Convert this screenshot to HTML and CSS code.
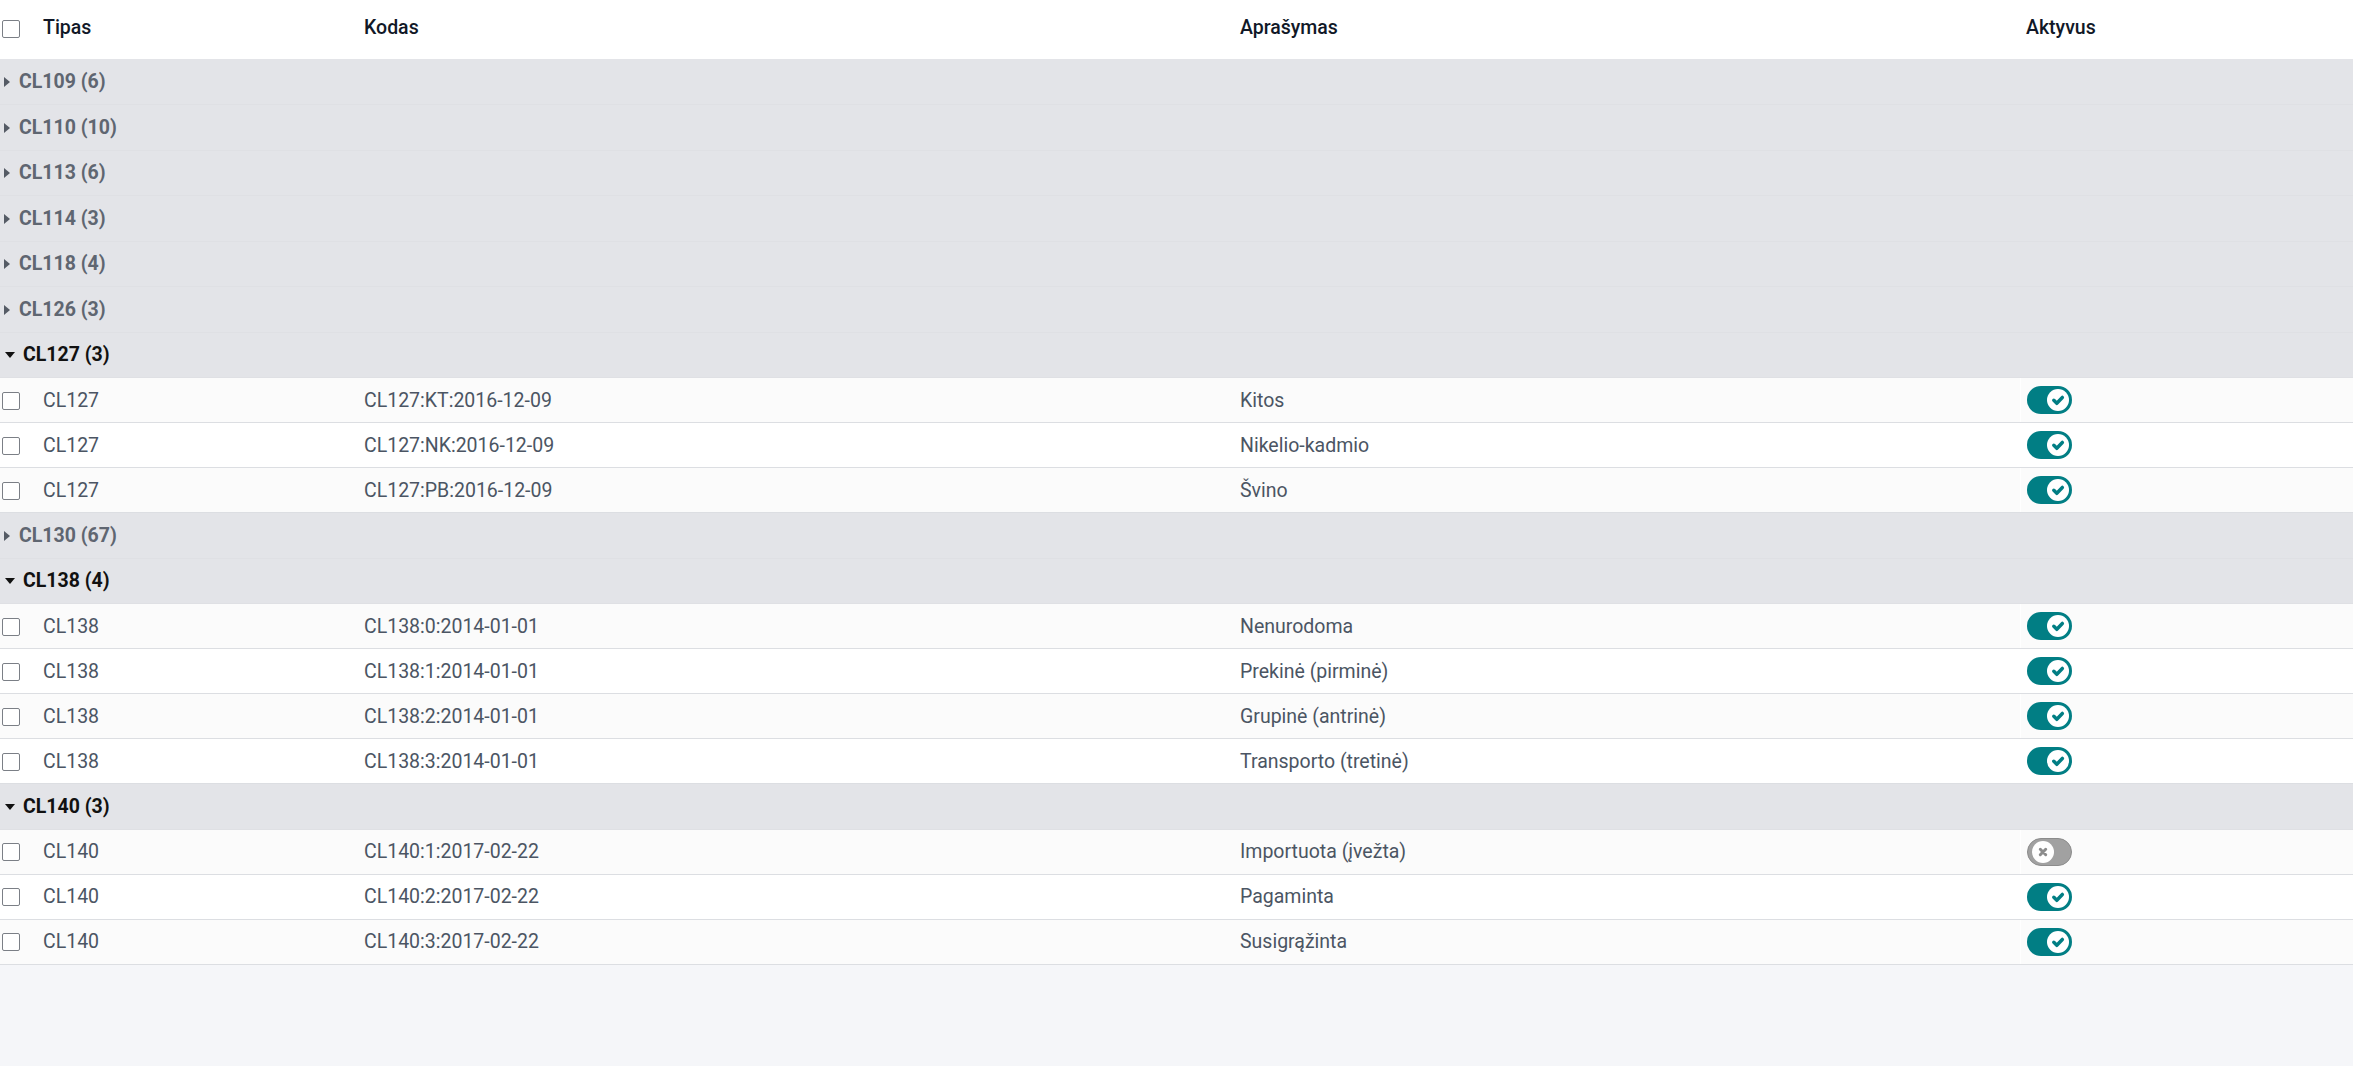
FILE: index.html
```html
<!DOCTYPE html>
<html lang="lt">
<head>
    <meta charset="UTF-8">
    <title>Klasifikatoriai</title>
    <link rel="stylesheet" href="styles.css">
</head>
<body>
    <table class="list">
        <colgroup>
            <col class="c-check">
            <col class="c-type">
            <col class="c-code">
            <col class="c-desc">
            <col class="c-active">
        </colgroup>
        <thead>
            <tr>
                <th><span class="box"></span></th>
                <th>Tipas</th>
                <th>Kodas</th>
                <th>Aprašymas</th>
                <th>Aktyvus</th>
            </tr>
        </thead>
        <tbody>
            <tr class="group"><td colspan="5"><span class="caret"></span>CL109 (6)</td></tr>
            <tr class="group"><td colspan="5"><span class="caret"></span>CL110 (10)</td></tr>
            <tr class="group"><td colspan="5"><span class="caret"></span>CL113 (6)</td></tr>
            <tr class="group"><td colspan="5"><span class="caret"></span>CL114 (3)</td></tr>
            <tr class="group"><td colspan="5"><span class="caret"></span>CL118 (4)</td></tr>
            <tr class="group"><td colspan="5"><span class="caret"></span>CL126 (3)</td></tr>
            <tr class="group open"><td colspan="5"><span class="caret"></span>CL127 (3)</td></tr>
            <tr class="rec odd">
                <td><span class="box"></span></td><td>CL127</td><td>CL127:KT:2016-12-09</td><td>Kitos</td>
                <td class="toggle-cell"><span class="toggle on"><span class="knob"><svg viewBox="0 0 12 12"><path d="M3.2 6.2l2 2L8.9 4.3"/></svg></span></span></td>
            </tr>
            <tr class="rec">
                <td><span class="box"></span></td><td>CL127</td><td>CL127:NK:2016-12-09</td><td>Nikelio-kadmio</td>
                <td class="toggle-cell"><span class="toggle on"><span class="knob"><svg viewBox="0 0 12 12"><path d="M3.2 6.2l2 2L8.9 4.3"/></svg></span></span></td>
            </tr>
            <tr class="rec odd">
                <td><span class="box"></span></td><td>CL127</td><td>CL127:PB:2016-12-09</td><td>Švino</td>
                <td class="toggle-cell"><span class="toggle on"><span class="knob"><svg viewBox="0 0 12 12"><path d="M3.2 6.2l2 2L8.9 4.3"/></svg></span></span></td>
            </tr>
            <tr class="group"><td colspan="5"><span class="caret"></span>CL130 (67)</td></tr>
            <tr class="group open"><td colspan="5"><span class="caret"></span>CL138 (4)</td></tr>
            <tr class="rec odd">
                <td><span class="box"></span></td><td>CL138</td><td>CL138:0:2014-01-01</td><td>Nenurodoma</td>
                <td class="toggle-cell"><span class="toggle on"><span class="knob"><svg viewBox="0 0 12 12"><path d="M3.2 6.2l2 2L8.9 4.3"/></svg></span></span></td>
            </tr>
            <tr class="rec">
                <td><span class="box"></span></td><td>CL138</td><td>CL138:1:2014-01-01</td><td>Prekinė (pirminė)</td>
                <td class="toggle-cell"><span class="toggle on"><span class="knob"><svg viewBox="0 0 12 12"><path d="M3.2 6.2l2 2L8.9 4.3"/></svg></span></span></td>
            </tr>
            <tr class="rec odd">
                <td><span class="box"></span></td><td>CL138</td><td>CL138:2:2014-01-01</td><td>Grupinė (antrinė)</td>
                <td class="toggle-cell"><span class="toggle on"><span class="knob"><svg viewBox="0 0 12 12"><path d="M3.2 6.2l2 2L8.9 4.3"/></svg></span></span></td>
            </tr>
            <tr class="rec">
                <td><span class="box"></span></td><td>CL138</td><td>CL138:3:2014-01-01</td><td>Transporto (tretinė)</td>
                <td class="toggle-cell"><span class="toggle on"><span class="knob"><svg viewBox="0 0 12 12"><path d="M3.2 6.2l2 2L8.9 4.3"/></svg></span></span></td>
            </tr>
            <tr class="group open"><td colspan="5"><span class="caret"></span>CL140 (3)</td></tr>
            <tr class="rec odd">
                <td><span class="box"></span></td><td>CL140</td><td>CL140:1:2017-02-22</td><td>Importuota (įvežta)</td>
                <td class="toggle-cell"><span class="toggle off"><span class="knob"><svg viewBox="0 0 12 12"><path d="M4.2 4.2l3.6 3.6M7.8 4.2l-3.6 3.6"/></svg></span></span></td>
            </tr>
            <tr class="rec">
                <td><span class="box"></span></td><td>CL140</td><td>CL140:2:2017-02-22</td><td>Pagaminta</td>
                <td class="toggle-cell"><span class="toggle on"><span class="knob"><svg viewBox="0 0 12 12"><path d="M3.2 6.2l2 2L8.9 4.3"/></svg></span></span></td>
            </tr>
            <tr class="rec odd">
                <td><span class="box"></span></td><td>CL140</td><td>CL140:3:2017-02-22</td><td>Susigrąžinta</td>
                <td class="toggle-cell"><span class="toggle on"><span class="knob"><svg viewBox="0 0 12 12"><path d="M3.2 6.2l2 2L8.9 4.3"/></svg></span></span></td>
            </tr>
        </tbody>
    </table>
</body>
</html>
```

FILE: styles.css
```css
html, body {
    margin: 0;
    padding: 0;
    background-color: #f5f6f9;
}
body {
    font-family: Roboto, "Noto Sans", sans-serif;
    font-size: 19.5px;
    color: #4b5563;
}
.list {
    width: 100%;
    border-collapse: collapse;
    table-layout: fixed;
    background: white;
}
.c-check { width: 37px; }
.c-type { width: 321px; }
.c-code { width: 876px; }
.c-desc { width: 786px; }
th, td {
    padding: 0 0 0 6px;
    text-align: left;
    white-space: nowrap;
    overflow: hidden;
}
th:first-child, td:first-child {
    padding-left: 2px;
}
thead th {
    height: 59px;
    box-sizing: border-box;
    font-weight: 500;
    color: #111827;
    vertical-align: middle;
    padding-bottom: 4px;
}
.box {
    display: inline-block;
    width: 16px;
    height: 16px;
    border: 1px solid #7b7f86;
    border-radius: 2px;
    background: white;
    vertical-align: middle;
}
.group td {
    height: 45.5px;
    box-sizing: border-box;
    background-color: #e3e4e8;
    border-bottom: 1px solid #dfe0e4;
    font-weight: 700;
    color: #5f6671;
    padding-left: 4px;
}
.group.open td {
    color: #111111;
}
.caret {
    display: inline-block;
    width: 0;
    height: 0;
    border-top: 5.5px solid transparent;
    border-bottom: 5.5px solid transparent;
    border-left: 6px solid #555b65;
    margin-right: 9px;
    vertical-align: 1px;
}
.group.open .caret {
    border-left: 5px solid transparent;
    border-right: 5px solid transparent;
    border-top: 6px solid #111111;
    border-bottom: 0;
    margin-left: 1px;
    margin-right: 8px;
    vertical-align: 3px;
}
.rec td {
    height: 45px;
    box-sizing: border-box;
    border-bottom: 1px solid #dcdee2;
    vertical-align: middle;
}
.rec.odd td {
    background-color: #fbfbfb;
}
.rec .box {
    vertical-align: -3px;
}
.toggle-cell {
    border-left: 1px solid #ffffff;
}
.toggle {
    display: inline-flex;
    align-items: center;
    width: 45px;
    height: 28px;
    border-radius: 14px;
    box-sizing: border-box;
    padding: 0 3px;
    vertical-align: middle;
}
.toggle.on {
    background-color: #017e84;
    justify-content: flex-end;
}
.toggle.off {
    background-color: #a1a1a1;
    border: 1px solid #8c8c8c;
    justify-content: flex-start;
    padding-left: 4px;
}
.knob {
    display: flex;
    width: 22px;
    height: 22px;
    border-radius: 50%;
    background: white;
    align-items: center;
    justify-content: center;
}
.knob svg {
    width: 18px;
    height: 18px;
    fill: none;
    stroke-width: 2.3;
    stroke-linecap: round;
    stroke-linejoin: round;
}
.toggle.on .knob svg { stroke: #017e84; }
.toggle.off .knob svg { stroke: #8c8c8c; stroke-width: 2; }
```
